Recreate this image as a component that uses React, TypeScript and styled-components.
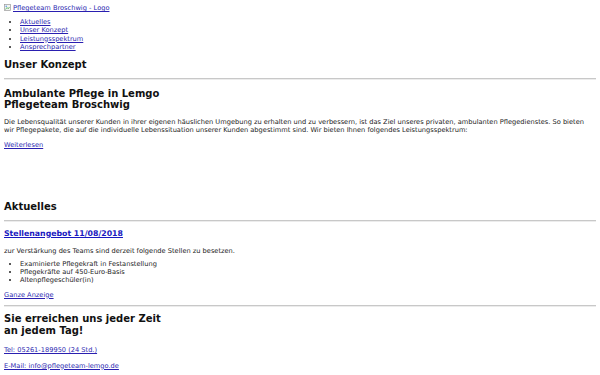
import React from 'react'
import styled, { createGlobalStyle } from 'styled-components'

const GlobalStyle = createGlobalStyle`
    html, body {
        margin: 0;
        padding: 0;
        background: #ffffff;
    }
    body {
        font-family: "DejaVu Sans", "Liberation Sans", sans-serif;
        font-size: 6.65px;
        color: #222222;
    }
`

const Page = styled.div`
    padding: 4px 4px 0 4px;
`

const Link = styled.a`
    color: #2a1fb0;
    text-decoration: underline;
    cursor: pointer;
`

const LogoLink = styled(Link)`
    display: flex;
    align-items: center;
    gap: 1px;
    height: 8px;
    line-height: 8px;
`

const NavList = styled.ul`
    margin: 6px 0 0 0;
    padding-left: 16px;
    line-height: 8.3px;
`

const SectionTitle = styled.h2<{ $top: number }>`
    font-size: 10px;
    font-weight: bold;
    color: #111111;
    margin: ${(p) => p.$top}px 0 0 0;
    line-height: 12px;
`

const Rule = styled.hr<{ $top: number }>`
    border: none;
    border-top: 1px solid #c8c8c8;
    border-bottom: 1px solid #ececec;
    margin: ${(p) => p.$top}px 0 0 0;
    height: 0;
`

const SubTitle = styled.h2<{ $top: number; $lh: number }>`
    font-size: 10px;
    font-weight: bold;
    color: #111111;
    margin: ${(p) => p.$top}px 0 0 0;
    line-height: ${(p) => p.$lh}px;
`

const Text = styled.p<{ $top: number }>`
    margin: ${(p) => p.$top}px 0 0 0;
    line-height: 8px;
`

const NewsTitle = styled.h3`
    font-size: 7.8px;
    font-weight: bold;
    margin: 7px 0 0 0;
    line-height: 10px;
    a {
        color: #1818c0;
    }
`

const JobList = styled.ul`
    margin: 5px 0 0 0;
    padding-left: 16px;
    line-height: 8px;
`

const BrokenImage = () => (
    <svg width="8" height="8" viewBox="0 0 8 8">
        <rect x="0.5" y="0.5" width="6" height="6" fill="#f3f3f3" stroke="#9a9a9a" strokeWidth="0.7" />
        <path d="M1.5 5.5 L3 3.5 L4.2 4.8 L5.5 3" stroke="#4caf50" strokeWidth="0.8" fill="none" />
        <circle cx="2.2" cy="2.2" r="0.7" fill="#3b8de0" />
    </svg>
)

const App: React.FC = () => {
    return (
        <>
            <GlobalStyle />
            <Page>
                <LogoLink><BrokenImage />Pflegeteam Broschwig - Logo</LogoLink>

                <NavList>
                    <li><Link>Aktuelles</Link></li>
                    <li><Link>Unser Konzept</Link></li>
                    <li><Link>Leistungsspektrum</Link></li>
                    <li><Link>Ansprechpartner</Link></li>
                </NavList>

                <SectionTitle $top={8}>Unser Konzept</SectionTitle>
                <Rule $top={7} />
                <SubTitle $top={8} $lh={11}>Ambulante Pflege in Lemgo<br />Pflegeteam Broschwig</SubTitle>
                <Text $top={7.5}>
                    Die Lebensqualität unserer Kunden in ihrer eigenen häuslichen Umgebung zu erhalten und zu verbessern, ist das Ziel unseres privaten, ambulanten Pflegedienstes. So bieten wir Pflegepakete, die auf die individuelle Lebenssituation unserer Kunden abgestimmt sind. Wir bieten Ihnen folgendes Leistungsspektrum:
                </Text>
                <Text $top={7}><Link>Weiterlesen</Link></Text>

                <SectionTitle $top={52}>Aktuelles</SectionTitle>
                <Rule $top={7} />
                <NewsTitle><Link>Stellenangebot 11/08/2018</Link></NewsTitle>
                <Text $top={8}>zur Verstärkung des Teams sind derzeit folgende Stellen zu besetzen.</Text>
                <JobList>
                    <li>Examinierte Pflegekraft in Festanstellung</li>
                    <li>Pflegekräfte auf 450-Euro-Basis</li>
                    <li>Altenpflegeschüler(in)</li>
                </JobList>
                <Text $top={7}><Link>Ganze Anzeige</Link></Text>
                <Rule $top={6} />

                <SubTitle $top={6} $lh={12}>Sie erreichen uns jeder Zeit<br />an jedem Tag!</SubTitle>
                <Text $top={9}><Link>Tel: 05261-189950 (24 Std.)</Link></Text>
                <Text $top={8}><Link>E-Mail: info@pflegeteam-lemgo.de</Link></Text>
            </Page>
        </>
    )
}

export default App
